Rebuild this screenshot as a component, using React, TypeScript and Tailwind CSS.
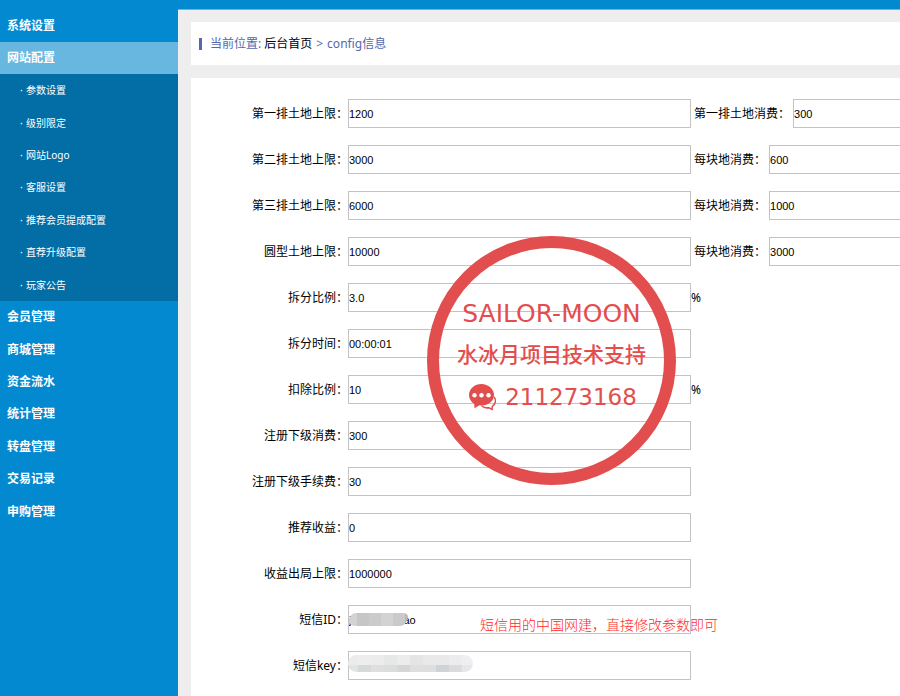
import { useState } from "react";

interface Field {
  id: string;
  label: string;
  value: string;
  suffix?: string;
  extra?: { label: string; value: string };
  mask?: "short" | "long";
  note?: string;
}

const SUB_MENU = ["参数设置", "级别限定", "网站Logo", "客服设置", "推荐会员提成配置", "直荐升级配置", "玩家公告"];

const MENU = ["会员管理", "商城管理", "资金流水", "统计管理", "转盘管理", "交易记录", "申购管理"];

const FIELDS: Field[] = [
  { id: "land1", label: "第一排土地上限：", value: "1200", extra: { label: "第一排土地消费：", value: "300" } },
  { id: "land2", label: "第二排土地上限：", value: "3000", extra: { label: "每块地消费：", value: "600" } },
  { id: "land3", label: "第三排土地上限：", value: "6000", extra: { label: "每块地消费：", value: "1000" } },
  { id: "land4", label: "圆型土地上限：", value: "10000", extra: { label: "每块地消费：", value: "3000" } },
  { id: "split_rate", label: "拆分比例：", value: "3.0", suffix: "%" },
  { id: "split_time", label: "拆分时间：", value: "00:00:01" },
  { id: "deduct", label: "扣除比例：", value: "10", suffix: "%" },
  { id: "reg_cost", label: "注册下级消费：", value: "300" },
  { id: "reg_fee", label: "注册下级手续费：", value: "30" },
  { id: "income", label: "推荐收益：", value: "0" },
  { id: "income_max", label: "收益出局上限：", value: "1000000" },
  {
    id: "sms_id",
    label: "短信ID：",
    value: "j" + "\u00a0".repeat(17) + "ao",
    mask: "short",
    note: "短信用的中国网建，直接修改参数即可",
  },
  { id: "sms_key", label: "短信key：", value: "", mask: "long" },
];

const SHORT_CELLS = ["#d2d2d2", "#c6c6c6", "#cbcbcb", "#d2d4d3", "#c9cac9", "#b9bab8"];
const LONG_TOP = ["#ebebeb", "#ededee", "#ececec", "#e6e8e8", "#ececed", "#e5e5e6", "#e9e9e9", "#e9e9ea", "#ececed", "#efeff1"];
const LONG_BOTTOM = ["#e3e3e4", "#d6d9da", "#dfdfe0", "#dadcdd", "#d3d7d9", "#e0dfde", "#dedede", "#d0d3d6", "#dadbdc", "#e6e7e9"];

function TextBox({ id, value }: { id: string; value: string }) {
  const [text, setText] = useState(value);
  return (
    <input
      id={id}
      name={id}
      type="text"
      autoComplete="off"
      value={text}
      onChange={(e) => setText(e.target.value)}
      className="h-[29px] w-[343px] shrink-0 border border-[#c3c3c3] bg-white font-['Liberation_Sans',sans-serif] text-[11px] text-black outline-none"
    />
  );
}

// Pixelated cover over the private SMS values
function Mask({ kind }: { kind: "short" | "long" }) {
  if (kind === "short") {
    return (
      <svg className="absolute left-px top-[7px]" width="60" height="15" viewBox="0 0 60 15" aria-hidden="true">
        <clipPath id="mask-short">
          <path d="M7 1H53Q59 1 59 5Q57 14 51 14H8Q0 14 0 9Q1 1 7 1Z" />
        </clipPath>
        <g clipPath="url(#mask-short)">
          {SHORT_CELLS.map((c, i) => (
            <rect key={i} x={i === 0 ? 0 : i * 12 - 4} y="0" width="13" height="15" fill={c} />
          ))}
        </g>
      </svg>
    );
  }
  return (
    <svg className="absolute left-0 top-[4px]" width="125" height="18" viewBox="0 0 125 18" aria-hidden="true">
      <clipPath id="mask-long">
        <rect width="125" height="17" rx="8.5" />
      </clipPath>
      <g clipPath="url(#mask-long)">
        {LONG_TOP.map((c, i) => (
          <rect key={i} x={i * 13 - 3} y="0" width="13" height="10" fill={c} />
        ))}
        {LONG_BOTTOM.map((c, i) => (
          <rect key={i} x={i * 13 - 3} y="10" width="13" height="8" fill={c} />
        ))}
      </g>
    </svg>
  );
}

function FieldRow({ field }: { field: Field }) {
  return (
    <div className="flex h-[29px] items-center">
      <label htmlFor={field.id} className="w-[157px] shrink-0 whitespace-nowrap text-right">
        {field.label}
      </label>
      <div className="relative shrink-0">
        <TextBox id={field.id} value={field.value} />
        {field.mask && <Mask kind={field.mask} />}
        {field.note && (
          <span className="absolute left-[132px] top-[10px] whitespace-nowrap text-[14px] leading-5 font-light text-[#ff2a2a]">
            {field.note}
          </span>
        )}
      </div>
      {field.suffix && <span>{field.suffix}</span>}
      {field.extra && (
        <div className="flex items-center gap-[3px] pl-[3px]">
          <label htmlFor={`${field.id}_cost`} className="whitespace-nowrap">
            {field.extra.label}
          </label>
          <TextBox id={`${field.id}_cost`} value={field.extra.value} />
        </div>
      )}
    </div>
  );
}

function ChatIcon() {
  return (
    <svg width="28" height="27" viewBox="0 0 28 27" aria-hidden="true">
      <path
        d="M12.5 0C5.6 0 0 4.9 0 11c0 3.7 2 6.9 5.2 8.900L5.500 24.300l5-3c.7.1 1.300.2 2 .2C19.400 21.500 25 17 25 11S19.400 0 12.500 0Z"
        fill="#e24e4e"
      />
      <circle cx="5.5" cy="11.2" r="2.200" fill="#fff" />
      <circle cx="12.5" cy="11.2" r="2.200" fill="#fff" />
      <circle cx="19.5" cy="11.2" r="2.200" fill="#fff" />
      <path
        d="M25.2 12.800c2.200 3.400 1.500 7.300-1.900 9.500l-.2 3.300-3.300-1.900c-2.800.5-5.400-.2-7.200-1.900"
        fill="none"
        stroke="#e24e4e"
        strokeWidth="1.5"
        strokeLinejoin="round"
      />
    </svg>
  );
}

function Stamp() {
  return (
    <div className="pointer-events-none absolute left-[236px] top-[158px] flex size-[249px] flex-col items-center rounded-full border-[12px] border-[#e24e4e] pt-[51px] text-[#e24e4e]">
      <p className="whitespace-nowrap font-['DejaVu_Sans',sans-serif] text-[25px] leading-[30px]">SAILOR-MOON</p>
      <p className="mt-[10px] whitespace-nowrap text-[21px] leading-[30px] font-medium">水冰月项目技术支持</p>
      <div className="mt-[13px] flex items-center gap-2 pl-[3px]">
        <ChatIcon />
        <span className="font-['DejaVu_Sans',sans-serif] text-[23px] leading-[30px]">211273168</span>
      </div>
    </div>
  );
}

export default function App() {
  return (
    <div className="flex h-screen overflow-hidden bg-[#eeeeee] font-['Noto_Sans','Noto_Sans_CJK_SC',sans-serif] text-[12px] leading-4 text-black">
      {/* Sidebar */}
      <nav className="w-[178px] shrink-0 bg-[#0389cf] pt-[10px] text-white">
        <a href="#system" className="flex h-8 items-center pl-[7px] font-bold">
          系统设置
        </a>
        <a href="#site" className="flex h-8 items-center bg-[#67b7e1] pl-[7px] font-bold">
          网站配置
        </a>
        <ul className="grid h-[227px] auto-rows-fr bg-[#036ea6] text-[10px]">
          {SUB_MENU.map((item) => (
            <li key={item} className="flex items-center pl-5">
              <a href="#config" className="flex items-center gap-1">
                <span className="w-[2px]">·</span>
                {item}
              </a>
            </li>
          ))}
        </ul>
        <ul className="grid h-[227px] auto-rows-fr font-bold">
          {MENU.map((item) => (
            <li key={item} className="flex items-center pl-[7px]">
              <a href="#menu">{item}</a>
            </li>
          ))}
        </ul>
      </nav>

      <main className="flex min-w-0 flex-1 flex-col">
        <div className="h-[10px] shrink-0 border-b border-[#67b7e1] bg-[#0389cf]" />
        <div className="flex min-h-0 flex-1 flex-col gap-[13px] pl-[13px] pt-3">
          {/* Breadcrumb */}
          <div className="flex h-[43px] shrink-0 items-center bg-white pl-2 pt-px text-[#5468aa]">
            <span className="mr-2 h-3 w-[3px] bg-[#5468aa]" />
            <span>当前位置:</span>
            <a href="#home" className="pl-[3px] text-black">
              后台首页
            </a>
            <span className="px-1">&gt;</span>
            <span>config信息</span>
          </div>

          {/* Config form */}
          <form className="relative flex flex-1 flex-col gap-[17px] overflow-hidden bg-white pt-[21px]">
            {FIELDS.map((f) => (
              <FieldRow key={f.id} field={f} />
            ))}
            <Stamp />
          </form>
        </div>
      </main>
    </div>
  );
}
